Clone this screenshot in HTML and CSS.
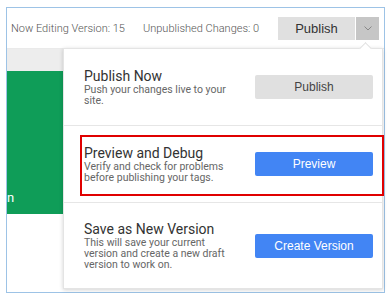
FILE: index.html
```html
<!DOCTYPE html>
<html lang="en">
  <head>
    <meta charset="UTF-8" />
    <meta name="viewport" content="width=device-width, initial-scale=1.0" />
    <title>Publish Menu</title>
    <link rel="stylesheet" href="styles.css">
  </head>
  <body>
    <div class="frame">
      <div class="toolbar">
        <span class="toolbar-text">Now Editing Version: 15</span>
        <span class="toolbar-text">Unpublished Changes: 0</span>
        <div class="split-button">
          <button type="button" class="split-main">Publish</button>
          <button type="button" class="split-toggle">
            <svg width="8" height="5" viewBox="0 0 8 5"><path d="M0.5 0.5 L4 4 L7.5 0.5" fill="none" stroke="#888" stroke-width="1"/></svg>
          </button>
        </div>
      </div>

      <div class="workspace">
        <div class="side">
          <div class="side-top"></div>
          <div class="side-green"><span>n</span></div>
        </div>
      </div>

      <div class="publish-menu">
        <div class="menu-caret"></div>

        <div class="menu-item">
          <div class="menu-text">
            <div class="menu-title">Publish Now</div>
            <div class="menu-desc">Push your changes live to your site.</div>
          </div>
          <button type="button" class="menu-button button-gray">Publish</button>
        </div>

        <div class="menu-item">
          <div class="menu-text">
            <div class="menu-title">Preview and Debug</div>
            <div class="menu-desc">Verify and check for problems before publishing your tags.</div>
          </div>
          <button type="button" class="menu-button button-blue">Preview</button>
          <div class="highlight-box"></div>
        </div>

        <div class="menu-item menu-item-last">
          <div class="menu-text">
            <div class="menu-title">Save as New Version</div>
            <div class="menu-desc">This will save your current version and create a new draft version to work on.</div>
          </div>
          <button type="button" class="menu-button button-blue">Create Version</button>
        </div>
      </div>
    </div>
  </body>
</html>
```

FILE: styles.css
```css
body {
  margin: 7px 0 0 6px;
  background: #FFFFFF;
  font-family: Roboto, "Liberation Sans", Arial, sans-serif;
}

.frame {
  position: relative;
  width: 377px;
  height: 284px;
  border: 1px solid #9DC3E6;
}

.toolbar {
  display: flex;
  align-items: center;
  column-gap: 18px;
  height: 40px;
  padding: 0 5px 0 4px;
  border-bottom: 1px solid #EAEAEA;
}

.toolbar-text {
  font-size: 11px;
  font-weight: 300;
  color: #555555;
  white-space: nowrap;
}

.split-button {
  display: flex;
  flex-shrink: 0;
  margin-left: auto;
  column-gap: 1px;
}

.split-main,
.split-toggle {
  border: none;
  padding: 0;
  height: 23px;
  cursor: pointer;
  font-family: "Liberation Sans", Arial, sans-serif;
}

.split-main {
  width: 77px;
  background: #E0E0E0;
  color: #333333;
  font-size: 13px;
}

.split-toggle {
  width: 23px;
  background: #C6C6C6;
  display: flex;
  align-items: center;
  justify-content: center;
}

.workspace {
  display: flex;
}

.side {
  width: 56px;
  display: flex;
  flex-direction: column;
}

.side-top {
  height: 22px;
  background: #EDEDED;
}

.side-green {
  height: 143px;
  background: #0F9D58;
  color: #FFFFFF;
  font-size: 13px;
  display: flex;
  align-items: flex-end;
  padding-bottom: 9px;
  box-sizing: border-box;
}

.publish-menu {
  position: absolute;
  left: 56px;
  top: 40px;
  width: 320px;
  height: 241px;
  background: #FFFFFF;
  border: 1px solid #E4E4E4;
  box-sizing: border-box;
  box-shadow: 0 1px 4px rgba(0, 0, 0, 0.18);
  display: flex;
  flex-direction: column;
}

.menu-caret {
  position: absolute;
  top: -5px;
  right: 12px;
  width: 8px;
  height: 8px;
  background: #FFFFFF;
  border-left: 1px solid #E0E0E0;
  border-top: 1px solid #E0E0E0;
  transform: rotate(45deg);
}

.menu-item {
  position: relative;
  display: flex;
  align-items: center;
  justify-content: space-between;
  height: 76px;
  padding: 0 9px 0 20px;
  border-bottom: 1px solid #E6E6E6;
}

.menu-item-last {
  flex-grow: 1;
  border-bottom: none;
}

.menu-text {
  width: 150px;
}

.menu-title {
  font-size: 14px;
  line-height: 16px;
  color: #333333;
}

.menu-desc {
  font-size: 10.5px;
  line-height: 11px;
  color: #666666;
}

.menu-button {
  width: 118px;
  height: 24px;
  border: none;
  border-radius: 2px;
  padding: 0;
  font-family: "Liberation Sans", Arial, sans-serif;
  font-size: 12px;
  cursor: pointer;
}

.button-gray {
  background: #E0E0E0;
  color: #444444;
}

.button-blue {
  background: #4285F4;
  color: #FFFFFF;
}

.highlight-box {
  position: absolute;
  left: 16px;
  right: -2px;
  top: 9px;
  bottom: 6px;
  border: 2px solid #E00000;
}
```
